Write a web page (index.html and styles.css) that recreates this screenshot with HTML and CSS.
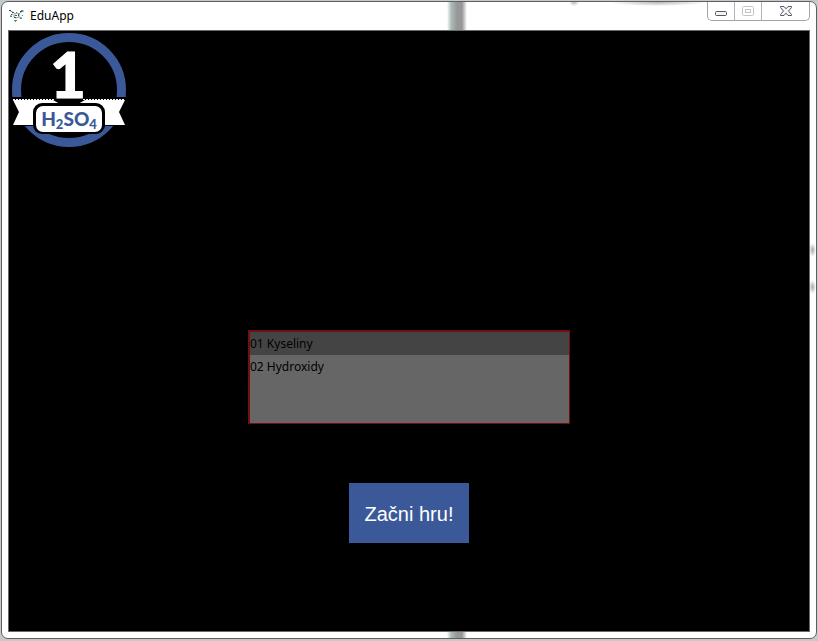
FILE: index.html
```html
<!DOCTYPE html>
<html lang="sk">
<head>
<meta charset="utf-8">
<title>EduApp</title>
<link rel="stylesheet" href="styles.css">
</head>
<body>
<div class="window">
  <header class="titlebar">
    <svg class="app-icon" viewBox="0 0 16 16" width="16" height="16" aria-hidden="true">
      <g fill="none" stroke="#8b9994" stroke-width="1">
        <path d="M1 3l3 1 2 2 2-1 2 1 2-2 3-1M5 6v3l2 1 3-1V6M1 8l3-2M10 9l3 1"/>
      </g>
      <g fill="#35506b"><path d="M0 2h2v1H0zM3 4h2v1H3zM5 9h2v1H5zM11 3h2v1h-2zM9 6h1v2H9zM2 6h1v1H2zM6 7h2v1H6z"/></g>
      <g fill="#4b9a5c"><path d="M12 2h2v1h-2zM5 12h3v1H5zM6 13h1v1H6zM1 8h2v1H1zM11 10h2v1h-2zM7 4h1v1H7zM13 7h1v1h-1z"/></g>
    </svg>
    <h1 class="title">EduApp</h1>
    <div class="controls">
      <button class="control" type="button" aria-label="Minimize">
        <svg viewBox="0 0 12 12" width="12" height="12"><rect x=".5" y="6.500" width="11" height="4" rx="1" fill="#f4f4f4" stroke="#535666"/></svg>
      </button>
      <button class="control" type="button" aria-label="Maximize" disabled>
        <svg viewBox="0 0 12 12" width="12" height="12" fill="none" stroke="#c4c4c4"><rect x=".5" y="1.500" width="11" height="9" rx="1"/><rect x="3.500" y="4.500" width="5" height="3"/></svg>
      </button>
      <button class="control control-close" type="button" aria-label="Close">
        <svg viewBox="0 0 12 12" width="12" height="12"><path d="M.5 1.500h3.500l2 2.300 2-2.300h3.500v1L8.500 6l3 3.500v1H8l-2-2.300-2 2.300H.5v-1l3-3.500-3-3.500z" fill="#f4f4f4" stroke="#535666"/></svg>
      </button>
    </div>
  </header>
  <main class="stage">
    <svg class="logo" viewBox="0 0 116 116" width="116" height="116" role="img" aria-label="1 H2SO4">
      <circle cx="58" cy="57" r="52.500" fill="none" stroke="#3b5998" stroke-width="9"/>
      <path d="M0 64h116v29H0z" fill="#000"/>
      <path d="M2 67h40l7 4v21H2l6-13z" fill="#fff"/>
      <path d="M114 67H74l-7 4v21h47l-6-13z" fill="#fff"/>
      <path d="M2 66.500h42M72 66.500h42" stroke="#fff" stroke-dasharray="2 1"/>
      <rect x="22" y="70" width="72" height="31" rx="9" fill="#000"/>
      <rect x="25" y="73" width="66" height="26" rx="7" fill="#fff"/>
      <text class="logo-number" x="57" y="65">1</text>
      <text class="logo-formula" x="58" y="93">H<tspan class="logo-sub" dy="3">2</tspan><tspan dy="-3">SO</tspan><tspan class="logo-sub" dy="3">4</tspan></text>
    </svg>
    <form class="menu">
      <select class="topics" size="4" aria-label="Topics">
        <option selected>01 Kyseliny</option>
        <option>02 Hydroxidy</option>
      </select>
      <button class="start" type="button">Začni hru!</button>
    </form>
  </main>
</div>
</body>
</html>
```
FILE: styles.css
```css
* {
  box-sizing: border-box;
}

body {
  margin: 0;
  height: 100vh;
  padding: 1px 1px 2px;
  background: #c6c8c9;
}

.window {
  display: flex;
  flex-direction: column;
  height: 100%;
  padding: 0 6px 6px;
  border: 1px solid #5f6161;
  border-radius: 7px;
  background:
    linear-gradient(90deg, #fff, #b0bcbc 4px, #979797 10px, #979797 15px, #fff 20px) 445px 0 / 20px 100% no-repeat,
    radial-gradient(closest-side, #aaa, #fff) right 241px / 7px 14px no-repeat,
    radial-gradient(closest-side, #aaa, #fff) right 278px / 7px 14px no-repeat,
    radial-gradient(closest-side, #bbb, #fff) 567px -3px / 10px 7px no-repeat,
    radial-gradient(closest-side, #bbb, #fff) 608px -3px / 96px 7px no-repeat,
    #fff;
}

.titlebar {
  display: flex;
  align-items: center;
  flex: none;
  height: 28px;
}

.app-icon {
  margin: 0 5px 0 1px;
}

.title {
  margin: 0;
  font: 12px/16px "Noto Sans", sans-serif;
  color: #000;
}

.controls {
  display: flex;
  align-self: flex-start;
  height: 19px;
  margin-left: auto;
  border: 1px solid #a3a3a3;
  border-top: 0;
  border-radius: 0 0 5px 5px;
  background: #fff;
}

.control {
  display: flex;
  align-items: center;
  justify-content: center;
  width: 27px;
  padding: 0;
  border: 0;
  border-right: 1px solid #b5b5b5;
  background: none;
}

.control-close {
  width: 47px;
  border-right: 0;
}

.stage {
  flex: 1;
  display: flex;
  flex-direction: column;
  border: 1px solid #696969;
  background: #000;
}

.logo {
  margin: 2px;
}

.logo-number,
.logo-formula {
  font-family: Lato, sans-serif;
  font-weight: 900;
  text-anchor: middle;
}

.logo-number {
  font-size: 62px;
  fill: #fff;
  stroke: #fff;
  stroke-width: 1px;
}

.logo-formula {
  font-size: 19px;
  fill: #3b5998;
}

.logo-sub {
  font-size: 13px;
}

.menu {
  flex: 1;
  display: flex;
  flex-direction: column;
  align-items: center;
  justify-content: flex-end;
  gap: 59px;
  padding-bottom: 88px;
}

.topics {
  width: 322px;
  height: 94px;
  padding: 0;
  border: 1px solid #721010;
  border-top-width: 2px;
  border-left-width: 2px;
  border-radius: 0;
  outline: 0;
  overflow: hidden;
  background: #666;
  font: 12px/17px "Noto Sans", sans-serif;
  color: #000;
}

.topics option {
  height: 23px;
  min-height: 23px;
  padding: 3px 0;
  color: #000;
}

.topics option:checked {
  background: #444 linear-gradient(#444, #444);
  color: #000;
}

.start {
  width: 120px;
  height: 60px;
  padding: 2px 0 0;
  border: 0;
  background: #3b5998;
  font: 20px/24px "Liberation Sans", sans-serif;
  color: #fff;
}
```
